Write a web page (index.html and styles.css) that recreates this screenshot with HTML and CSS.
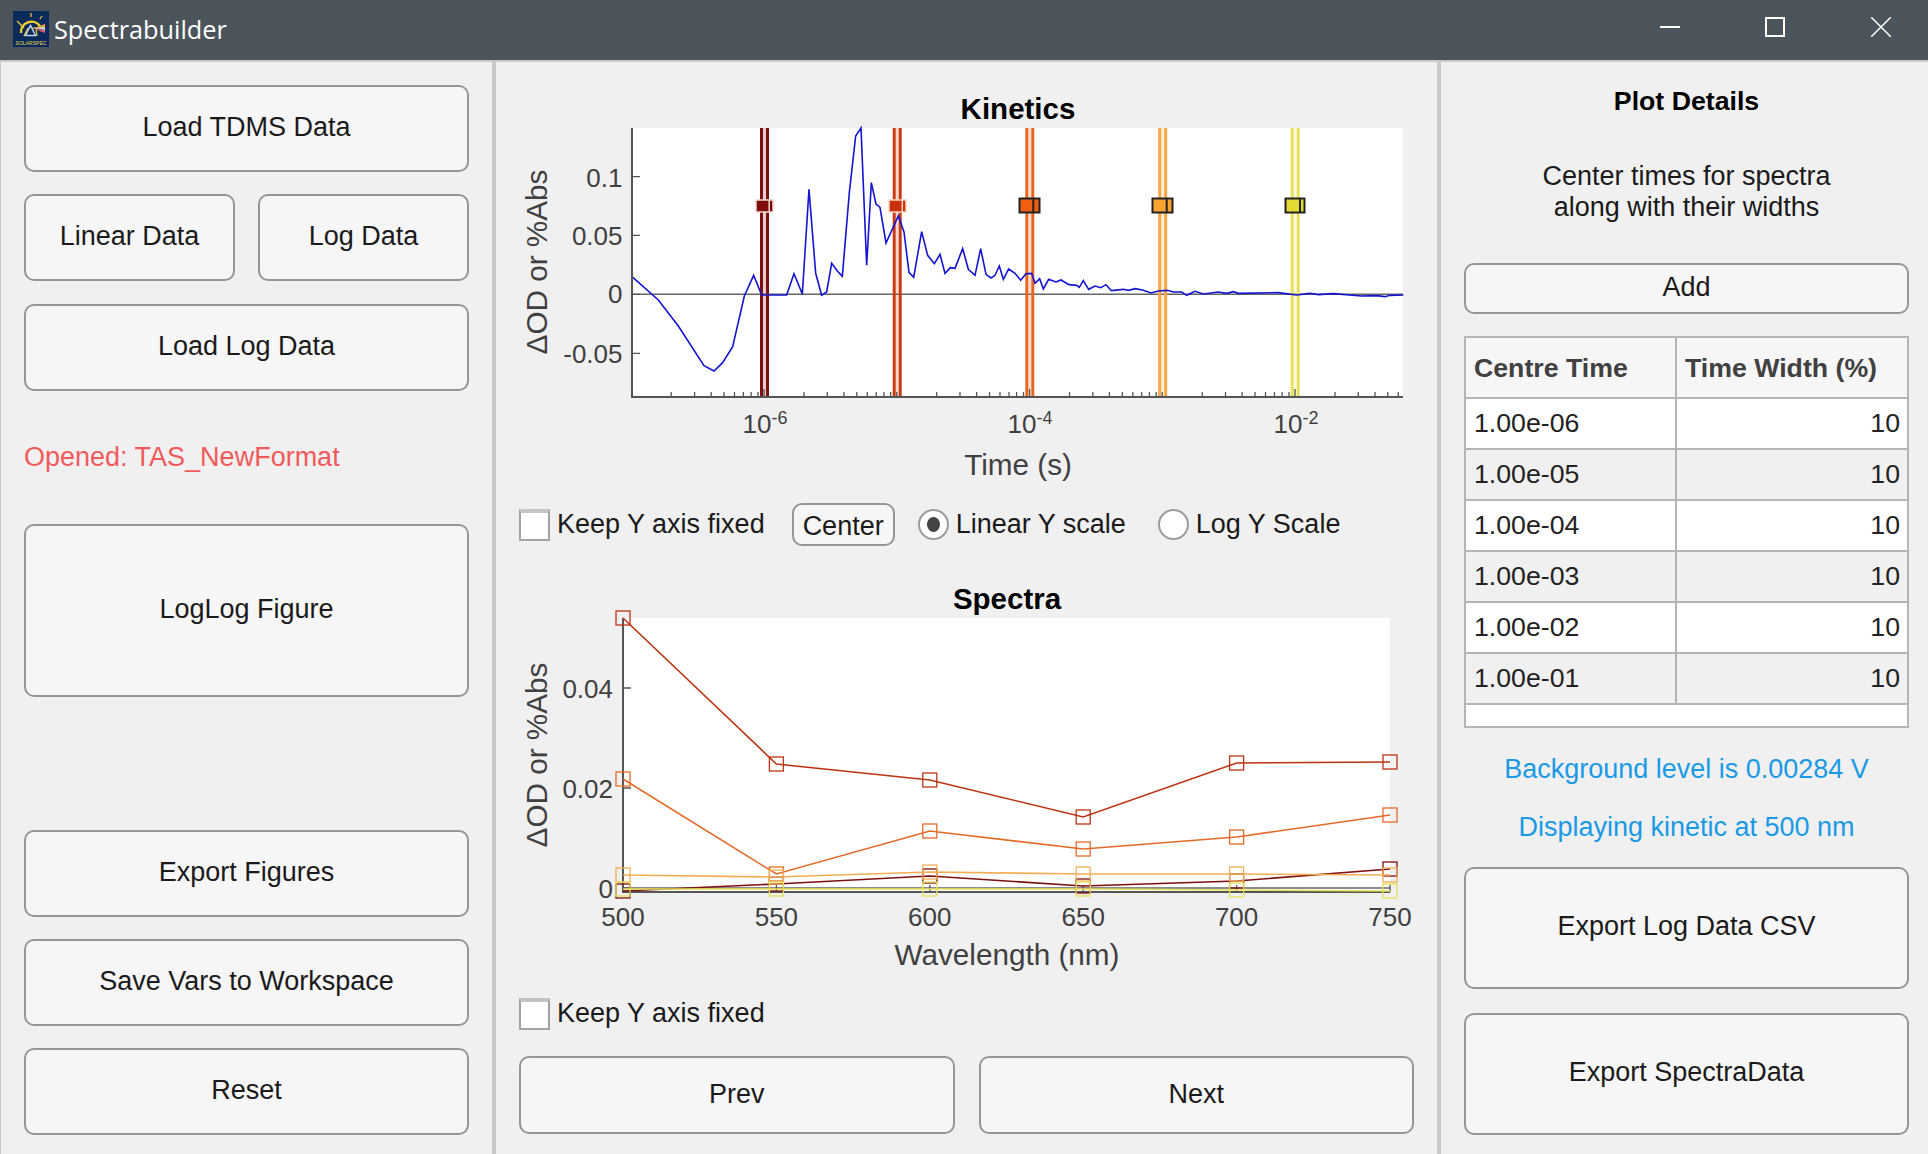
FILE: index.html
```html
<!DOCTYPE html>
<html lang="en">
<head>
<meta charset="utf-8">
<title>Spectrabuilder</title>
<link rel="stylesheet" href="styles.css">
</head>
<body>
<header class="titlebar">
  <div class="app-id">
    <svg class="logo" viewBox="0 0 36 36" aria-hidden="true">
      <rect width="36" height="36" fill="#0b2a5b"/>
      <path d="M8 22a10.500 10.500 0 0 1 19-7" fill="none" stroke="#f2cf2f" stroke-width="2.400"/>
      <path d="M4 10l7 7M18 2v4M29 5l-2 3M11 25l4-8M24 25l-1-8M19 17h11" fill="none" stroke="#f2cf2f" stroke-width="1.200"/>
      <path d="M12.500 24.500l5-10 5 10z" fill="none" stroke="#bcd0ee" stroke-width="1.500"/>
      <path d="M21 17l11-4v3z" fill="#e8a33c"/>
      <path d="M21 17l11-1v3z" fill="#d9d9d9"/>
      <path d="M21 18l11 1v3z" fill="#d85a6a"/>
      <text class="logo-text" x="18" y="33.500" text-anchor="middle" textLength="31" lengthAdjust="spacingAndGlyphs">SOLARSPEC</text>
    </svg>
    <span class="app-name">Spectrabuilder</span>
  </div>
  <div class="win-controls">
    <span class="win-min"></span>
    <span class="win-max"></span>
    <svg class="win-close" viewBox="0 0 20 20" aria-hidden="true"><path d="M0 0l20 20M20 0L0 20" stroke="#fff" stroke-width="1.500"/></svg>
  </div>
</header>

<main class="app">
  <section class="panel panel-left">
    <button class="btn h-87">Load TDMS Data</button>
    <div class="btn-row">
      <button class="btn h-87 grow">Linear Data</button>
      <button class="btn h-87 grow">Log Data</button>
    </div>
    <button class="btn h-87 nudge">Load Log Data</button>
    <p class="status">Opened: TAS_NewFormat</p>
    <button class="btn h-173">LogLog Figure</button>
    <button class="btn h-87 push-bottom">Export Figures</button>
    <button class="btn h-87">Save Vars to Workspace</button>
    <button class="btn h-87">Reset</button>
  </section>

  <section class="panel panel-mid">
    <svg class="chart chart-kinetics" viewBox="497 62 940 438" role="img" aria-label="Kinetics plot">
      <text class="chart-title" x="1018" y="119" text-anchor="middle">Kinetics</text>
      <rect x="632" y="128" width="771" height="269" fill="#fff"/>

      <line class="axis-thin" x1="632" y1="294.300" x2="1403" y2="294.300"/>

      <rect class="band" x="763" y="128" width="3" height="269" fill="#7f1010"/>
      <path class="band-edge" stroke="#7f1010" d="M761.500 128V397M767.500 128V397"/>
      <rect class="band" x="895.700" y="128" width="3" height="269" fill="#c83a12"/>
      <path class="band-edge" stroke="#c83a12" d="M894.200 128V397M900.200 128V397"/>
      <rect class="band" x="1028.300" y="128" width="3" height="269" fill="#e9661f"/>
      <path class="band-edge" stroke="#e9661f" d="M1026.800 128V397M1032.800 128V397"/>
      <rect class="band" x="1161.200" y="128" width="3" height="269" fill="#f3a641"/>
      <path class="band-edge" stroke="#f3a641" d="M1159.700 128V397M1165.700 128V397"/>
      <rect class="band" x="1293.700" y="128" width="3" height="269" fill="#e7e15a"/>
      <path class="band-edge" stroke="#e7e15a" d="M1292.200 128V397M1298.200 128V397"/>

      <g transform="translate(500 80) scale(0.33333)">
        <polyline class="trace" points="396,590 475,660 535,738 612,857 642,873 668,848 698,800 733,648 761,586 785,645 860,645 882,581 907,642 927,328 947,580 965,646 980,636 995,550 1012,573 1027,589 1048,338 1067,168 1083,144 1100,556 1114,308 1128,372 1140,382 1158,489 1195,408 1212,456 1227,577 1241,592 1265,455 1283,526 1303,551 1320,523 1335,580 1352,562"/>
      </g>
      <g transform="translate(950 80) scale(0.33333)">
        <polyline class="trace" points="0,563 15,565 38,506 55,568 75,586 92,506 108,583 123,594 135,586 148,558 160,598 176,567 195,580 212,601 228,581 245,580 255,610 269,596 280,627 296,598 318,606 333,600 357,614 380,616 388,622 400,602 416,628 435,618 452,623 468,614 484,632 520,628 535,631 556,626 580,631 603,639 625,633 652,631 670,636 695,636 710,646 735,634 760,642 805,636 830,640 850,635 865,640 985,638 1040,645 1080,640 1105,644 1150,641 1235,648 1280,647 1305,650 1320,646 1360,645"/>
      </g>

      <rect x="756" y="200" width="17" height="12" fill="#7f0c0c" stroke="#f5d8d0" stroke-width="1.500"/>
      <line x1="769.200" y1="200" x2="769.200" y2="212" stroke="#f5d8d0" stroke-width="1.500"/>
      <rect x="889" y="200" width="17" height="12" fill="#c8300a" stroke="#f8d4c4" stroke-width="1.500"/>
      <line x1="902.300" y1="200" x2="902.300" y2="212" stroke="#f8d4c4" stroke-width="1.500"/>
      <rect class="handle" x="1019.500" y="198.500" width="20" height="14" fill="#ee5f12"/>
      <line class="handle-line" x1="1033.300" y1="198.500" x2="1033.300" y2="212.500"/>
      <rect class="handle" x="1152.500" y="198.500" width="20" height="14" fill="#f9a430"/>
      <line class="handle-line" x1="1166.700" y1="198.500" x2="1166.700" y2="212.500"/>
      <rect class="handle" x="1285.500" y="198.500" width="19" height="14" fill="#e3d933"/>
      <line class="handle-line" x1="1300" y1="198.500" x2="1300" y2="212.500"/>

      <path class="axis" d="M632 128V397H1403"/>
      <path class="tick-mark" d="M632 176.700h8M632 235.300h8M632 294.300h8M632 353.300h8"/>
      <path class="tick-mark" d="M671.200 397v-5M694.600 397v-5M711.200 397v-5M724 397v-5M734.500 397v-5M743.400 397v-5M751.200 397v-5M758 397v-5M764 397v-8M804 397v-5M827.300 397v-5M843.900 397v-5M856.800 397v-5M867.300 397v-5M876.200 397v-5M883.900 397v-5M890.700 397v-5M896.750 397v-5M936.750 397v-5M960 397v-5M976.600 397v-5M989.500 397v-5M1000 397v-5M1009 397v-5M1016.600 397v-5M1023.500 397v-5M1029.500 397v-8M1069.500 397v-5M1092.800 397v-5M1109.400 397v-5M1122.300 397v-5M1132.800 397v-5M1141.700 397v-5M1149.400 397v-5M1156.200 397v-5M1162.250 397v-5M1202.250 397v-5M1225.500 397v-5M1242.100 397v-5M1255 397v-5M1265.500 397v-5M1274.500 397v-5M1282.100 397v-5M1289 397v-5M1295 397v-8M1335 397v-5M1358.300 397v-5M1375 397v-5M1387.800 397v-5M1398.300 397v-5"/>

      <text class="tick" x="622.500" y="186.700" text-anchor="end">0.1</text>
      <text class="tick" x="622.500" y="244.500" text-anchor="end">0.05</text>
      <text class="tick" x="622.500" y="303" text-anchor="end">0</text>
      <text class="tick" x="622.500" y="362.500" text-anchor="end">-0.05</text>
      <text class="tick" x="765" y="433" text-anchor="middle">10<tspan class="sup" dy="-9">-6</tspan></text>
      <text class="tick" x="1030" y="433" text-anchor="middle">10<tspan class="sup" dy="-9">-4</tspan></text>
      <text class="tick" x="1296" y="433" text-anchor="middle">10<tspan class="sup" dy="-9">-2</tspan></text>
      <text class="axis-label" x="1018" y="475" text-anchor="middle">Time (s)</text>
      <text class="axis-label" transform="translate(547 262) rotate(-90)" text-anchor="middle">ΔOD or %Abs</text>
    </svg>

    <div class="controls">
      <label class="check"><span class="box"></span>Keep Y axis fixed</label>
      <button class="btn btn-small">Center</button>
      <label class="radio"><span class="dot dot-on"></span>Linear Y scale</label>
      <label class="radio radio-last"><span class="dot"></span>Log Y Scale</label>
    </div>

    <svg class="chart chart-spectra" viewBox="497 552 940 423" role="img" aria-label="Spectra plot">
      <defs>
        <marker id="m-dark" markerUnits="userSpaceOnUse" markerWidth="18" markerHeight="18" refX="9" refY="9"><rect x="2" y="2" width="14" height="14" fill="none" stroke="#7f1010" stroke-width="1.300"/></marker>
        <marker id="m-red" markerUnits="userSpaceOnUse" markerWidth="18" markerHeight="18" refX="9" refY="9"><rect x="2" y="2" width="14" height="14" fill="none" stroke="#bd3412" stroke-width="1.300"/></marker>
        <marker id="m-orange" markerUnits="userSpaceOnUse" markerWidth="18" markerHeight="18" refX="9" refY="9"><rect x="2" y="2" width="14" height="14" fill="none" stroke="#e56a28" stroke-width="1.300"/></marker>
        <marker id="m-amber" markerUnits="userSpaceOnUse" markerWidth="18" markerHeight="18" refX="9" refY="9"><rect x="2" y="2" width="14" height="14" fill="none" stroke="#f3ae55" stroke-width="1.300"/></marker>
        <marker id="m-yellow" markerUnits="userSpaceOnUse" markerWidth="18" markerHeight="18" refX="9" refY="9"><rect x="2" y="2" width="14" height="14" fill="none" stroke="#e7e15a" stroke-width="1.300"/></marker>
      </defs>
      <text class="chart-title" x="1007" y="609" text-anchor="middle">Spectra</text>
      <rect x="623" y="618" width="767" height="274" fill="#fff"/>

      <line class="axis-thin" x1="623" y1="888" x2="1390" y2="888"/>
      <path class="axis" d="M623 618V892H1390"/>
      <path class="tick-mark" d="M623 688h8M623 788h8M623 888h8M776.400 892v-7M929.800 892v-7M1083.200 892v-7M1236.600 892v-7M1390 892v-7"/>

      <polyline class="series" stroke="#7f1010" marker-start="url(#m-dark)" marker-mid="url(#m-dark)" marker-end="url(#m-dark)" points="623,891 776.400,884 929.800,876 1083.200,886 1236.600,881 1390,869"/>
      <polyline class="series" stroke="#bd3412" marker-start="url(#m-red)" marker-mid="url(#m-red)" marker-end="url(#m-red)" points="623,618 776.400,764 929.800,780 1083.200,817 1236.600,763 1390,762"/>
      <polyline class="series" stroke="#e56a28" marker-start="url(#m-orange)" marker-mid="url(#m-orange)" marker-end="url(#m-orange)" points="623,779 776.400,874 929.800,831 1083.200,849 1236.600,837 1390,815"/>
      <polyline class="series" stroke="#f3ae55" marker-start="url(#m-amber)" marker-mid="url(#m-amber)" marker-end="url(#m-amber)" points="623,875 776.400,877 929.800,872 1083.200,874 1236.600,874 1390,875"/>
      <polyline class="series" stroke="#e7e15a" marker-start="url(#m-yellow)" marker-mid="url(#m-yellow)" marker-end="url(#m-yellow)" points="623,889 776.400,889 929.800,889 1083.200,889 1236.600,890 1390,891"/>

      <text class="tick" x="613" y="698" text-anchor="end">0.04</text>
      <text class="tick" x="613" y="798" text-anchor="end">0.02</text>
      <text class="tick" x="613" y="898" text-anchor="end">0</text>
      <text class="tick" x="623" y="926" text-anchor="middle">500</text>
      <text class="tick" x="776.400" y="926" text-anchor="middle">550</text>
      <text class="tick" x="929.800" y="926" text-anchor="middle">600</text>
      <text class="tick" x="1083.200" y="926" text-anchor="middle">650</text>
      <text class="tick" x="1236.600" y="926" text-anchor="middle">700</text>
      <text class="tick" x="1390" y="926" text-anchor="middle">750</text>
      <text class="axis-label" x="1007" y="965" text-anchor="middle">Wavelength (nm)</text>
      <text class="axis-label" transform="translate(547 755) rotate(-90)" text-anchor="middle">ΔOD or %Abs</text>
    </svg>

    <div class="controls controls-second">
      <label class="check"><span class="box"></span>Keep Y axis fixed</label>
    </div>

    <div class="nav-row">
      <button class="btn grow h-78">Prev</button>
      <button class="btn grow h-78">Next</button>
    </div>
  </section>

  <section class="panel panel-right">
    <h2 class="details-title">Plot Details</h2>
    <p class="details-text">Center times for spectra<br>along with their widths</p>
    <button class="btn h-51">Add</button>
    <div class="table-wrap">
      <table class="times">
        <thead>
          <tr><th class="col-a">Centre Time</th><th>Time Width (%)</th></tr>
        </thead>
        <tbody>
          <tr><td>1.00e-06</td><td class="num">10</td></tr>
          <tr class="alt"><td>1.00e-05</td><td class="num">10</td></tr>
          <tr><td>1.00e-04</td><td class="num">10</td></tr>
          <tr class="alt"><td>1.00e-03</td><td class="num">10</td></tr>
          <tr><td>1.00e-02</td><td class="num">10</td></tr>
          <tr class="alt"><td>1.00e-01</td><td class="num">10</td></tr>
        </tbody>
      </table>
    </div>
    <p class="info info-first">Background level is 0.00284 V</p>
    <p class="info">Displaying kinetic at 500 nm</p>
    <button class="btn h-122 info-after">Export Log Data CSV</button>
    <button class="btn h-122">Export SpectraData</button>
  </section>
</main>
</body>
</html>
```

FILE: styles.css
```css
* { box-sizing: border-box; }

html, body {
  margin: 0;
  height: 100%;
}

body {
  width: 1928px;
  height: 1154px;
  overflow: hidden;
  background: #f0f0f0;
  color: #1a1a1a;
  font-family: "Liberation Sans", Arial, sans-serif;
  font-size: 27px;
}

/* title bar */
.titlebar {
  height: 60px;
  background: #4b545b;
  display: flex;
  align-items: center;
  justify-content: space-between;
  padding: 0 37px 0 13px;
}

.app-id {
  display: flex;
  align-items: center;
  gap: 5px;
}

.logo {
  width: 36px;
  height: 36px;
  margin-bottom: 2px;
  display: block;
}

.logo-text {
  font-family: "Liberation Sans", sans-serif;
  font-size: 5.500px;
  fill: #e9d84a;
}

.app-name {
  font-family: "Open Sans", "Noto Sans", sans-serif;
  font-size: 25.300px;
  color: #fff;
  margin-bottom: 2px;
}

.win-controls {
  display: flex;
  align-items: center;
  gap: 85px;
  margin-bottom: 7px;
}

.win-min {
  width: 20px;
  height: 2px;
  background: #fff;
}

.win-max {
  width: 20px;
  height: 20px;
  margin-right: 1px;
  border: 2px solid #fff;
}

.win-close {
  width: 20px;
  height: 20px;
  display: block;
}

/* shell */
.app {
  height: 1094px;
  display: flex;
  border-top: 2px solid #c9c9c9;
  border-left: 1px solid #c9c9c9;
}

.panel {
  display: flex;
  flex-direction: column;
  min-width: 0;
}

.panel-left {
  width: 495px;
  padding: 23px 23px 19px 23px;
  gap: 22px;
  border-right: 4px solid #c9c9c9;
}

.panel-mid {
  width: 945px;
  border-right: 4px solid #c9c9c9;
}

.panel-right {
  flex: 1;
  padding: 0 19px 19px 23px;
}

/* buttons */
.btn {
  display: flex;
  align-items: center;
  justify-content: center;
  width: 100%;
  padding: 0 0 2px;
  background: #f6f6f6;
  border: 2px solid #969696;
  border-radius: 10px;
  color: #1a1a1a;
  font-family: inherit;
  font-size: 27px;
}

.h-51 { height: 51px; flex: none; }
.h-78 { height: 78px; }
.h-87 { height: 87px; flex: none; }
.h-122 { height: 122px; flex: none; }
.h-173 { height: 173px; flex: none; }

.grow { flex: 1; min-width: 0; }

.nudge { margin-top: 1px; }

.btn-row {
  display: flex;
  gap: 23px;
}

.status {
  margin: -22px 0;
  height: 133px;
  display: flex;
  align-items: center;
  color: #f05a5a;
  font-size: 27px;
}

.push-bottom { margin-top: auto; }

/* charts */
.chart {
  display: block;
  flex: none;
  width: 940px;
  margin-left: 1px;
}

.chart-kinetics { height: 438px; }
.chart-spectra { height: 423px; }

.chart-title {
  font-family: "Liberation Sans", sans-serif;
  font-size: 29.500px;
  font-weight: 700;
  fill: #000;
}

.tick {
  font-family: "Liberation Sans", sans-serif;
  font-size: 26px;
  fill: #404040;
}

.sup { font-size: 18px; }

.axis-label {
  font-family: "Liberation Sans", sans-serif;
  font-size: 29.700px;
  fill: #404040;
}

.axis {
  fill: none;
  stroke: #555;
  stroke-width: 2;
}

.axis-thin {
  stroke: #666;
  stroke-width: 1.500;
}

.tick-mark {
  fill: none;
  stroke: #555;
  stroke-width: 1.300;
}

.band {
  fill-opacity: 0.2;
}

.band-edge {
  fill: none;
  stroke-width: 3;
}

.trace {
  fill: none;
  stroke: #1414d2;
  stroke-width: 1.600;
  vector-effect: non-scaling-stroke;
}

.handle {
  stroke: #222;
  stroke-width: 2;
}

.handle-line {
  stroke: #222;
  stroke-width: 2;
}

.series {
  fill: none;
  stroke-width: 1.600;
}

/* inline controls */
.controls {
  height: 52px;
  flex: none;
  padding: 0 0 4px 23px;
  display: flex;
  align-items: center;
}

.controls-second {
  height: 76px;
  padding-bottom: 0;
}

.check, .radio {
  display: flex;
  align-items: center;
  gap: 7px;
  white-space: nowrap;
}

.box {
  width: 31px;
  height: 32px;
  background: #fff;
  border: 2px solid #a3a3a3;
  border-top: 4px solid #c4c4c4;
  display: block;
  margin-top: 2px;
}

.btn-small {
  width: 103px;
  height: 43px;
  margin-left: 27px;
  padding: 4px 0 0;
  flex: none;
}

.radio { margin-left: 23px; }
.radio-last { margin-left: 32px; }

.dot {
  width: 31px;
  height: 31px;
  border-radius: 50%;
  border: 2px solid #9c9c9c;
  background: #fff;
  display: flex;
  align-items: center;
  justify-content: center;
}

.dot-on::after {
  content: "";
  width: 13px;
  height: 15px;
  border-radius: 50%;
  background: #444;
}

.nav-row {
  display: flex;
  gap: 24px;
  padding: 5px 23px 0;
}

/* right panel */
.details-title {
  margin: 0;
  height: 78px;
  padding-top: 1px;
  display: flex;
  align-items: center;
  justify-content: center;
  font-size: 26.700px;
  font-weight: 700;
  color: #000;
}

.details-text {
  margin: 21px 0 40px;
  text-align: center;
  line-height: 31px;
  height: 63px;
}

.table-wrap {
  margin-top: 22px;
  height: 392px;
  flex: none;
  background: #fff;
  border: 2px solid #b5b5b5;
}

.times {
  width: 100%;
  border-collapse: collapse;
  table-layout: fixed;
  font-size: 26.700px;
}

.times th {
  height: 60px;
  padding: 2px 0 0 8px;
  background: #f6f6f6;
  border-right: 2px solid #b5b5b5;
  border-bottom: 2px solid #b5b5b5;
  color: #404040;
  font-weight: 700;
  text-align: left;
  white-space: nowrap;
}

.times th:last-child,
.times td:last-child { border-right: 0; }

.col-a { width: 210px; }

.times td {
  height: 51px;
  padding: 0 7px 0 8px;
  background: #fff;
  border-right: 2px solid #b5b5b5;
  border-bottom: 2px solid #b5b5b5;
  color: #222;
}

.times .alt td { background: #f0f0f0; }
.times .num { text-align: right; }

.info {
  margin: 0;
  height: 58px;
  display: flex;
  align-items: center;
  justify-content: center;
  color: #1a9ae6;
  font-size: 27px;
  white-space: nowrap;
}

.info-first { margin-top: 12px; }
.info-after { margin-top: 11px; margin-bottom: 24px; }
```
